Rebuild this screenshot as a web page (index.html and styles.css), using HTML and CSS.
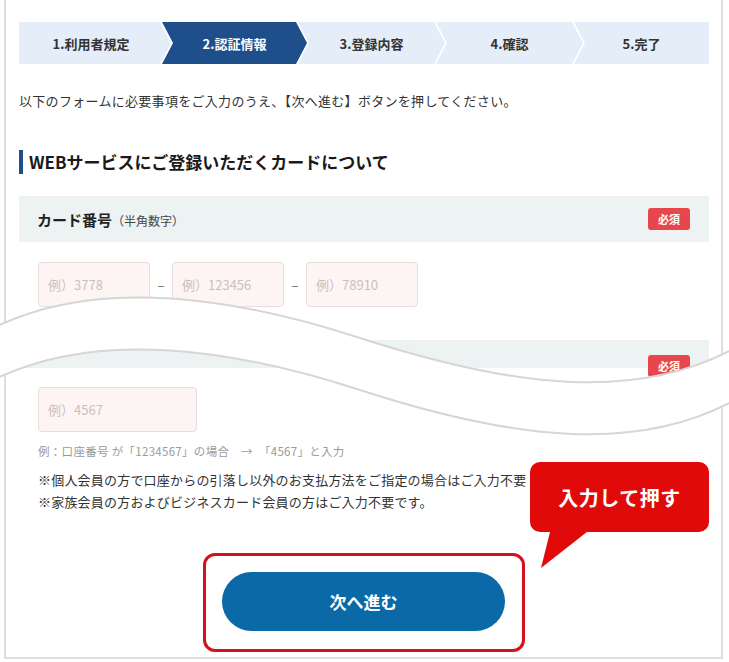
FILE: index.html
```html
<!DOCTYPE html>
<html lang="ja">
<head>
<meta charset="utf-8">
<title>認証情報</title>
<link rel="stylesheet" href="styles.css">
</head>
<body>
<div class="frame">
  <ol class="steps">
    <li class="step step-1">1.利用者規定</li>
    <li class="step step-2 is-active">2.認証情報</li>
    <li class="step step-3">3.登録内容</li>
    <li class="step step-4">4.確認</li>
    <li class="step step-5">5.完了</li>
  </ol>
  <p class="intro">以下のフォームに必要事項をご入力のうえ、【次へ進む】ボタンを押してください。</p>
  <h2 class="section-title">WEBサービスにご登録いただくカードについて</h2>
  <div class="field-head">
    <span class="field-label">カード番号<small>（半角数字）</small></span>
    <span class="badge">必須</span>
  </div>
  <div class="field-row">
    <input class="text-input w-card" type="text" placeholder="例）3778">
    <span class="dash">–</span>
    <input class="text-input w-card" type="text" placeholder="例）123456">
    <span class="dash">–</span>
    <input class="text-input w-card" type="text" placeholder="例）78910">
  </div>
  <div class="field-head is-cut">
    <span class="badge">必須</span>
  </div>
  <div class="field-row after-cut">
    <input class="text-input w-acct" type="text" placeholder="例）4567">
  </div>
  <p class="hint">例：口座番号 が「1234567」の場合　→　「4567」と入力</p>
  <p class="note">※個人会員の方で口座からの引落し以外のお支払方法をご指定の場合はご入力不要</p>
  <p class="note">※家族会員の方およびビジネスカード会員の方はご入力不要です。</p>
  <div class="submit-highlight">
    <button class="btn-next" type="button">次へ進む</button>
  </div>
</div>

<svg class="tear" viewBox="0 0 729 460" width="729" height="460" aria-hidden="true">
  <path class="tear-fill" d="M-5,327 C80,286 200,286 360,338 S640,400 735,348 L735,400 C640,452 520,442 360,390 C200,338 80,338 -5,379 Z"/>
  <path class="tear-edge" d="M-5,327 C80,286 200,286 360,338 S640,400 735,348"/>
  <path class="tear-edge" d="M-5,379 C80,338 200,338 360,390 S640,452 735,400"/>
</svg>

<div class="callout">
  <svg class="callout-shape" viewBox="0 0 180 107" width="180" height="107" aria-hidden="true">
    <rect x="0" y="0" width="179" height="70" rx="10"/>
    <polygon points="21,66 62,66 11,106"/>
  </svg>
  <div class="callout-text">入力して押す</div>
</div>
</body>
</html>
```

FILE: styles.css
```css
* { box-sizing: border-box; }

html, body {
  margin: 0;
  padding: 0;
  background: #fff;
}

body {
  font-family: "Noto Sans CJK JP", "Noto Sans", sans-serif;
  color: #333;
  width: 729px;
  height: 662px;
  overflow: hidden;
}

.frame {
  margin-left: 4px;
  width: 719px;
  border: 2px solid #dedede;
  border-top: 0;
  padding: 22px 12px 5px 13px;
}

/* step bar */
.steps {
  list-style: none;
  margin: 0;
  padding: 0;
  display: flex;
  height: 42px;
}

.step {
  flex: none;
  height: 42px;
  margin-left: -9px;
  display: flex;
  align-items: center;
  justify-content: center;
  background: #e4edf8;
  color: #333;
  font-size: 13px;
  font-weight: 700;
  clip-path: polygon(0 0, calc(100% - 11px) 0, 100% 50%, calc(100% - 11px) 100%, 0 100%, 11px 50%);
}

.step-1 {
  width: 152px;
  margin-left: 0;
  padding-right: 8px;
  clip-path: polygon(0 0, calc(100% - 11px) 0, 100% 50%, calc(100% - 11px) 100%, 0 100%);
}
.step-2 { width: 145px; }
.step-3, .step-4 { width: 147px; }
.step-5 {
  width: 135px;
  clip-path: polygon(0 0, 100% 0, 100% 100%, 0 100%, 11px 50%);
}

.step.is-active {
  background: #1e4f8b;
  color: #fff;
}

.intro {
  margin: 27px 0 0;
  font-size: 13px;
  line-height: 20px;
  letter-spacing: 0.3px;
  color: #333;
}

.section-title {
  margin: 39px 0 0;
  font-size: 17px;
  line-height: 24px;
  font-weight: 700;
  color: #1a1a1a;
  border-left: 4px solid #1e4f8b;
  padding-left: 6px;
}

/* field header */
.field-head {
  margin-top: 22px;
  height: 46px;
  background: #edf2f2;
  display: flex;
  align-items: center;
  justify-content: space-between;
  padding: 0 19px 0 18px;
}

.field-label {
  font-size: 15px;
  font-weight: 700;
  color: #222;
}

.field-label small {
  font-size: 12px;
  font-weight: 400;
  color: #444;
}

.badge {
  flex: none;
  width: 42px;
  height: 22px;
  border-radius: 3px;
  background: #e8464d;
  color: #fff;
  font-size: 11px;
  font-weight: 700;
  display: flex;
  align-items: center;
  justify-content: center;
}

.field-head.is-cut {
  margin-top: 33px;
  height: 28px;
  align-items: flex-start;
  justify-content: flex-end;
  padding-top: 15px;
}

/* inputs */
.field-row {
  margin-top: 20px;
  padding-left: 19px;
  display: flex;
  align-items: center;
  gap: 7px;
}

.field-row.after-cut { margin-top: 19px; }

.text-input {
  height: 45px;
  border: 1px solid #eadcdc;
  border-radius: 4px;
  background: #fdf5f4;
  padding: 0 9px;
  font: 13px "Noto Sans CJK JP", "Noto Sans", sans-serif;
  color: #333;
  outline: none;
}

.text-input::placeholder { color: #cdbebe; }

.w-card { width: 112px; }
.w-acct { width: 159px; }

.dash {
  width: 8px;
  text-align: center;
  color: #666;
  font-size: 13px;
}

.hint {
  margin: 11px 0 0 19px;
  font-size: 11.5px;
  line-height: 16px;
  letter-spacing: 0.3px;
  color: #9a9a9a;
}

.note {
  margin: 0 0 0 19px;
  font-size: 13px;
  line-height: 22px;
  letter-spacing: 0.2px;
  color: #333;
  white-space: nowrap;
}

.hint + .note { margin-top: 10px; }

/* submit */
.submit-highlight {
  width: 322px;
  margin: 40px auto 0;
  border: 3px solid #d3121c;
  border-radius: 12px;
  padding: 16px 17px 18px 16px;
}

.btn-next {
  display: block;
  width: 283px;
  height: 59px;
  border: 0;
  border-radius: 30px;
  background: #0b69a8;
  color: #fff;
  font: 700 17px "Noto Sans CJK JP", "Noto Sans", sans-serif;
  cursor: pointer;
}

/* torn-page overlay */
.tear {
  position: absolute;
  left: 0;
  top: 0;
  pointer-events: none;
}

.tear-fill { fill: #fff; }

.tear-edge {
  fill: none;
  stroke: #d6d6d6;
  stroke-width: 2;
}

/* callout */
.callout {
  position: absolute;
  left: 530px;
  top: 462px;
  width: 180px;
  height: 107px;
}

.callout-shape {
  position: absolute;
  left: 0;
  top: 0;
  fill: #e10a0a;
}

.callout-text {
  position: relative;
  width: 179px;
  height: 70px;
  display: flex;
  align-items: center;
  justify-content: center;
  color: #fff;
  font-size: 20px;
  font-weight: 700;
  letter-spacing: 0.5px;
}
```
